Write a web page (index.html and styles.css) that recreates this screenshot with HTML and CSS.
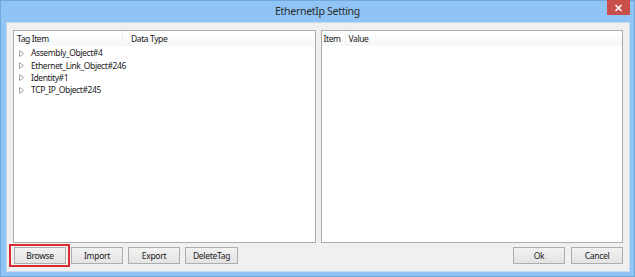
FILE: index.html
```html
<!DOCTYPE html>
<html>
<head>
<meta charset="utf-8">
<link rel="stylesheet" href="styles.css">
</head>
<body>
<div class="window">
  <div class="titlebar">
    <span class="title">EthernetIp Setting</span>
    <button class="close" aria-label="Close"><svg width="9" height="8" viewBox="0 0 9 8"><path d="M1.5 1 L7.5 7 M7.5 1 L1.5 7" stroke="#fff" stroke-width="1.6"/></svg></button>
  </div>
  <div class="client">
    <div class="panels">
      <div class="panel">
        <div class="header">
          <div class="col col-tag">Tag Item</div>
          <div class="col col-type">Data Type</div>
        </div>
        <ul class="tree">
          <li><svg class="arrow" width="5" height="7" viewBox="0 0 5 7"><path d="M0.5 0.5 L4.5 3.5 L0.5 6.5 Z" fill="none" stroke="#a6a6a6" stroke-width="1"/></svg><span>Assembly_Object#4</span></li>
          <li><svg class="arrow" width="5" height="7" viewBox="0 0 5 7"><path d="M0.5 0.5 L4.5 3.5 L0.5 6.5 Z" fill="none" stroke="#a6a6a6" stroke-width="1"/></svg><span>Ethernet_Link_Object#246</span></li>
          <li><svg class="arrow" width="5" height="7" viewBox="0 0 5 7"><path d="M0.5 0.5 L4.5 3.5 L0.5 6.5 Z" fill="none" stroke="#a6a6a6" stroke-width="1"/></svg><span>Identity#1</span></li>
          <li><svg class="arrow" width="5" height="7" viewBox="0 0 5 7"><path d="M0.5 0.5 L4.5 3.5 L0.5 6.5 Z" fill="none" stroke="#a6a6a6" stroke-width="1"/></svg><span>TCP_IP_Object#245</span></li>
        </ul>
      </div>
      <div class="panel">
        <div class="header">
          <div class="col col-item">Item</div>
          <div class="col col-value">Value</div>
        </div>
      </div>
    </div>
    <div class="actions">
      <div class="group">
        <button class="btn highlighted">Browse</button>
        <button class="btn">Import</button>
        <button class="btn">Export</button>
        <button class="btn wide">DeleteTag</button>
      </div>
      <div class="group right">
        <button class="btn">Ok</button>
        <button class="btn">Cancel</button>
      </div>
    </div>
  </div>
</div>
</body>
</html>
```
FILE: styles.css
```css
html, body {
  margin: 0;
  padding: 0;
}
body {
  width: 635px;
  height: 277px;
  overflow: hidden;
  font-family: "Noto Sans", "Open Sans", sans-serif;
  font-size: 8.5px;
  letter-spacing: -0.4px;
  color: #1a1a1a;
}
.window {
  width: 635px;
  height: 277px;
  box-sizing: border-box;
  background: #8fc4f4;
  border: 1px solid #6fa9dc;
  display: flex;
  flex-direction: column;
}
.titlebar {
  height: 21px;
  position: relative;
  display: flex;
  justify-content: center;
  align-items: center;
}
.title {
  font-size: 10.5px;
  letter-spacing: -0.3px;
  color: #2b2b2b;
  margin-top: -1px;
}
.close {
  position: absolute;
  top: -1px;
  right: 4px;
  width: 23px;
  height: 15px;
  background: #c9504a;
  border: none;
  padding: 0;
  display: flex;
  align-items: center;
  justify-content: center;
}
.client {
  flex: 1;
  margin: 0 4px 4px 5px;
  background: #f0f0f0;
  border: 1px solid #c4d9ec;
  display: flex;
  flex-direction: column;
  padding: 7px 6px 0 6px;
}
.panels {
  display: flex;
  gap: 5px;
  height: 213px;
}
.panel {
  flex: 1;
  background: #fff;
  border: 1px solid #acacac;
}
.header {
  display: flex;
  height: 15px;
  align-items: center;
  background: linear-gradient(#ffffff, #f6f7f8);
}
.col {
  height: 15px;
  line-height: 15px;
  box-sizing: border-box;
}
.col-tag {
  width: 109px;
  padding-left: 3px;
  border-right: 1px solid #f0f0f0;
}
.col-type {
  padding-left: 8px;
}
.col-item {
  width: 24px;
  padding-left: 2px;
  border-right: 1px solid #f0f0f0;
}
.col-value {
  padding-left: 3px;
}
.tree {
  list-style: none;
  margin: 0;
  padding: 1px 0 0 0;
}
.tree li {
  height: 12.4px;
  line-height: 12px;
  display: flex;
  align-items: center;
}
.arrow {
  flex: none;
  margin-left: 5px;
  margin-right: 7px;
}
.actions {
  display: flex;
  justify-content: space-between;
  margin-top: 4px;
  padding-left: 1px;
}
.group {
  display: flex;
  gap: 5px;
}
.group.right {
  gap: 6px;
}
.btn {
  position: relative;
  width: 52px;
  height: 17px;
  padding: 0;
  font-family: inherit;
  font-size: 8.5px;
  letter-spacing: -0.3px;
  color: #1a1a1a;
  background: linear-gradient(#f2f2f2, #e3e3e3);
  border: 1px solid #adadad;
  line-height: 15px;
}
.btn.wide {
  width: 53px;
}
.highlighted::after {
  content: "";
  position: absolute;
  left: -6px;
  top: -4px;
  right: -5px;
  bottom: -4px;
  border: 2px solid #dc2a33;
}
```
